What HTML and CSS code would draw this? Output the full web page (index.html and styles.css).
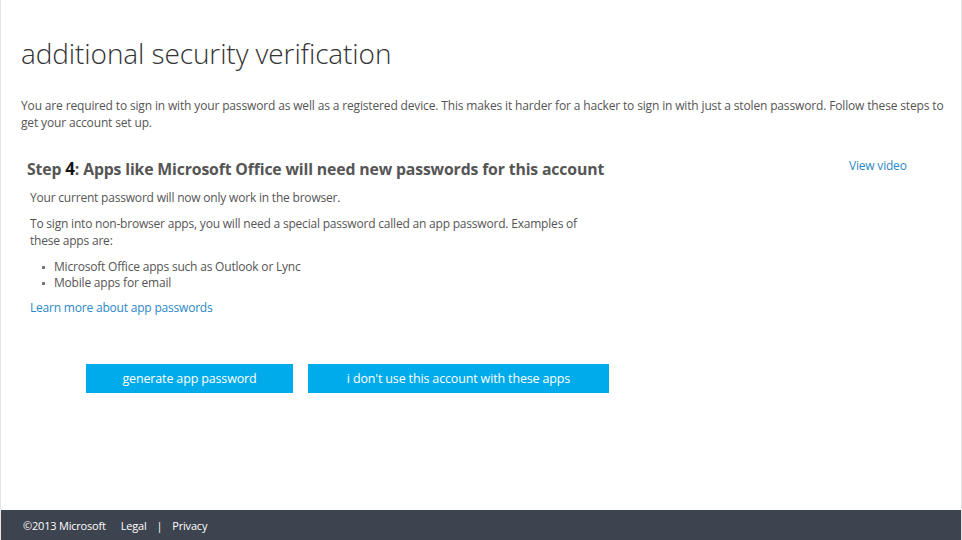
FILE: index.html
```html
<!DOCTYPE html>
<html>
<head>
<meta charset="utf-8">
<link rel="stylesheet" href="styles.css">
</head>
<body>
<div class="frame">
  <main class="main">
    <h1 class="title">additional security verification</h1>
    <p class="intro">You are required to sign in with your password as well as a registered device. This makes it harder for a hacker to sign in with just a stolen password. Follow these steps to get your account set up.</p>
    <div class="step-row">
      <div class="step">
        <h2 class="step-title">Step <span class="num">4</span>: Apps like Microsoft Office will need new passwords for this account</h2>
        <div class="step-body">
          <p class="txt">Your current password will now only work in the browser.</p>
          <p class="txt">To sign into non-browser apps, you will need a special password called an app password. Examples of these apps are:</p>
          <ul class="list">
            <li>Microsoft Office apps such as Outlook or Lync</li>
            <li>Mobile apps for email</li>
          </ul>
          <a class="link" href="#">Learn more about app passwords</a>
        </div>
      </div>
      <a class="link video" href="#">View video</a>
    </div>
    <div class="buttons">
      <button class="btn btn-gen">generate app password</button>
      <button class="btn btn-no">i don't use this account with these apps</button>
    </div>
  </main>
  <footer class="footer">
    <span>©2013 Microsoft</span>
    <a href="#" class="flink">Legal</a>
    <span class="sep">|</span>
    <a href="#" class="flink">Privacy</a>
  </footer>
</div>
</body>
</html>
```

FILE: styles.css
```css
* { box-sizing: border-box; }
html, body { margin: 0; padding: 0; height: 100%; }
body {
  font-family: "Open Sans", "Noto Sans", sans-serif;
  color: #444;
  background: #fff;
}
.frame {
  height: 540px;
  width: 962px;
  border-left: 1px solid #e6e6e6;
  border-right: 1px solid #e6e6e6;
  display: flex;
  flex-direction: column;
}
.main {
  flex: 1;
  padding: 34px 14px 0 20px;
}
.title {
  margin: 0;
  font-weight: 300;
  font-size: 28px;
  line-height: 38px;
  color: #333;
  letter-spacing: -0.1px;
}
.intro {
  margin: 25px 0 0 0;
  font-size: 12px;
  line-height: 17px;
  color: #555;
  letter-spacing: -0.15px;
}
.step-row {
  display: flex;
  margin-top: 28px;
}
.step { width: 600px; padding-left: 6px; flex-shrink: 0; }
.step-title {
  margin: 0;
  font-size: 15.8px;
  line-height: 20px;
  font-weight: 700;
  color: #555;
  letter-spacing: -0.15px;
  white-space: nowrap;
}
.num { color: #111; font-size: 17px; }
.step-body { padding-left: 3px; }
.txt {
  margin: 10px 0 0 0;
  font-size: 12px;
  line-height: 17px;
  color: #555;
  width: 560px;
  letter-spacing: -0.2px;
}
.txt + .txt { margin-top: 9px; }
.list {
  margin: 10px 0 0 0;
  padding-left: 24px;
  list-style: none;
  font-size: 12px;
  line-height: 16px;
  color: #555;
  letter-spacing: -0.2px;
}
.list li { position: relative; }
.list li::before {
  content: "";
  position: absolute;
  left: -12px;
  top: 7px;
  width: 3px;
  height: 3px;
  background: #777;
}
.link {
  display: inline-block;
  margin-top: 8px;
  font-size: 12px;
  line-height: 17px;
  color: #2b88c8;
  text-decoration: none;
  letter-spacing: -0.2px;
}
.video { margin: -2px 0 0 228px; line-height: 17px; align-self: flex-start; }
.buttons {
  display: flex;
  gap: 15px;
  margin: 47px 0 0 65px;
}
.btn {
  height: 29px;
  border: none;
  background: #00abec;
  color: #fff;
  font-family: inherit;
  font-size: 12.5px;
  padding: 0;
  letter-spacing: -0.15px;
}
.btn-gen { width: 207px; }
.btn-no { width: 301px; }
.footer {
  height: 30px;
  background: #3d434f;
  color: #fff;
  display: flex;
  align-items: center;
  padding-left: 22px;
  font-size: 11px;
  letter-spacing: -0.2px;
}
.flink { color: #fff; text-decoration: none; margin-left: 15px; }
.sep { margin-left: 10px; }
.sep + .flink { margin-left: 10px; }
```
